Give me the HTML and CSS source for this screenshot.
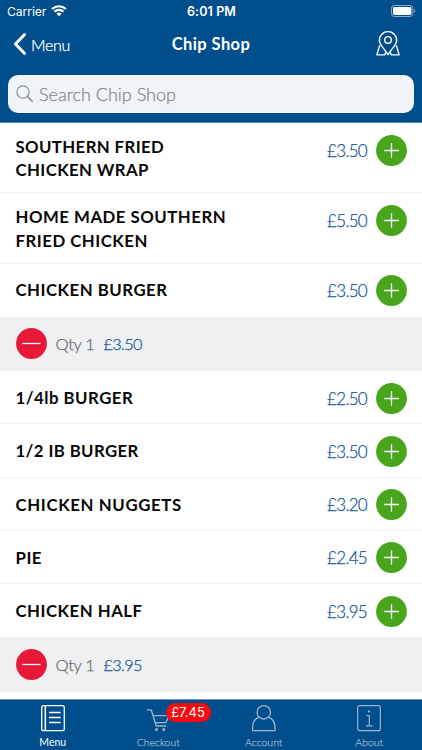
FILE: index.html
```
<!DOCTYPE html>
<html lang="en">
<head>
<meta charset="utf-8">
<title>Chip Shop</title>
<link rel="stylesheet" href="styles.css">
</head>
<body>
<svg class="defs" width="0" height="0">
  <symbol id="plus" viewBox="0 0 31 31"><circle cx="15.5" cy="15.5" r="15.4" fill="#49a51b"/><path d="M8.3 15.5h14.6M15.5 8.2v14.6" stroke="#fff" stroke-width="1.3"/></symbol>
  <symbol id="minus" viewBox="0 0 31 31"><circle cx="15.5" cy="15.5" r="15.4" fill="#e71939"/><path d="M6.3 15.5h18.2" stroke="#fff" stroke-width="1.3"/></symbol>
</svg>
<div class="screen">
  <header class="header">
    <div class="status">
      <div class="carrier"><span>Carrier</span>
        <svg width="16" height="12" viewBox="0 0 16 12" fill="#fff"><path d="M8 11.300 5.400 8.700a3.800 3.800 0 0 1 5.200 0z"/><path d="M3.400 6.700a6.600 6.600 0 0 1 9.200 0M1.100 4.100a9.900 9.900 0 0 1 13.800 0" fill="none" stroke="#fff" stroke-width="2.100"/></svg>
      </div>
      <span class="time">6:01 PM</span>
      <svg class="battery" width="25" height="12" viewBox="0 0 25 12"><rect x=".5" y=".5" width="21.4" height="11" rx="2.8" fill="none" stroke="#8eacc9"/><rect x="2" y="2" width="18.4" height="8" rx="1.4" fill="#fff"/><path d="M23.2 4v4c1.4-.6 1.4-3.4 0-4" fill="#8eacc9"/></svg>
    </div>
    <nav class="nav">
      <div class="back"><svg width="14" height="22" viewBox="0 0 14 22"><path d="M11.4 1.700 2.400 11l9 9.300" fill="none" stroke="#fff" stroke-width="3" stroke-linecap="round" stroke-linejoin="round"/></svg><span>Menu</span></div>
      <h1 class="title">Chip Shop</h1>
      <svg class="pin" width="24" height="26" viewBox="0 0 24 26" fill="none" stroke="#fff" stroke-width="1.400" stroke-linejoin="round"><path d="M12 23.700C9.100 18.600 3.300 14.200 3.300 9.300a8.700 8.700 0 0 1 17.400 0c0 4.900-5.800 9.300-8.700 14.400z"/><circle cx="12" cy="8.900" r="3.300"/><path d="M4.300 14.900H3.500L.9 23.900h7.700l1.500-2.700M19.700 14.900h.8l2.600 9h-7.700l-1.500-2.700"/></svg>
    </nav>
    <div class="search"><svg width="18" height="18" viewBox="0 0 18 18" fill="none" stroke="#8e9094" stroke-width="1.200"><circle cx="7" cy="7" r="6.100"/><path d="m11.400 11.400 5.200 5.200" stroke-width="1.500"/></svg><span>Search Chip Shop</span></div>
  </header>
  <main class="list">
    <div class="row tall"><span class="name">SOUTHERN FRIED<br>CHICKEN WRAP</span><span class="price">£3.50</span><svg class="dot"><use href="#plus"/></svg></div>
    <div class="row tall"><span class="name wide">HOME MADE SOUTHERN<br>FRIED CHICKEN</span><span class="price">£5.50</span><svg class="dot"><use href="#plus"/></svg></div>
    <div class="row last"><span class="name wide">CHICKEN BURGER</span><span class="price">£3.50</span><svg class="dot"><use href="#plus"/></svg></div>
    <div class="qty"><svg class="dot"><use href="#minus"/></svg><span class="count">Qty 1</span><span class="price">£3.50</span></div>
    <div class="row"><span class="name wide">1/4lb BURGER</span><span class="price">£2.50</span><svg class="dot"><use href="#plus"/></svg></div>
    <div class="row"><span class="name">1/2 IB BURGER</span><span class="price">£3.50</span><svg class="dot"><use href="#plus"/></svg></div>
    <div class="row"><span class="name wider">CHICKEN NUGGETS</span><span class="price">£3.20</span><svg class="dot"><use href="#plus"/></svg></div>
    <div class="row"><span class="name wide">PIE</span><span class="price">£2.45</span><svg class="dot"><use href="#plus"/></svg></div>
    <div class="row last"><span class="name wide">CHICKEN HALF</span><span class="price">£3.95</span><svg class="dot"><use href="#plus"/></svg></div>
    <div class="qty"><svg class="dot"><use href="#minus"/></svg><span class="count">Qty 1</span><span class="price">£3.95</span></div>
  </main>
  <footer class="tabs">
    <div class="tab active"><svg width="26" height="28" viewBox="0 0 26 28" fill="none" stroke="currentColor" stroke-width="1.300"><rect x="1.700" y="1.700" width="22.600" height="25" rx="2"/><path d="M5.300 1.500v25.400" stroke-width="1.500"/><path d="M9 8.500h11.600M9 13.500h11.600M9 18.500h11.600"/></svg><span>Menu</span></div>
    <div class="tab"><svg width="26" height="28" viewBox="0 0 26 28" fill="none" stroke="currentColor" stroke-width="1.300" stroke-linejoin="round"><path d="M1.800 5.800h4.400l5 16.200h10M8 11.700h16L20.800 18.700H10.300"/><circle cx="11.500" cy="25.600" r="1.500" fill="currentColor" stroke="none"/><circle cx="18.800" cy="25.600" r="1.500" fill="currentColor" stroke="none"/></svg><span>Checkout</span><b class="badge">£7.45</b></div>
    <div class="tab"><svg width="26" height="28" viewBox="0 0 26 28" fill="none" stroke="currentColor" stroke-width="1.300" stroke-linejoin="round"><circle cx="12.800" cy="8.300" r="6.700"/><path d="M8 13.100C3.800 14.900 1.600 19 1.600 23.500v3.100h22.400v-3.100c0-4.500-2.200-8.600-6.400-10.400"/></svg><span>Account</span></div>
    <div class="tab"><svg width="26" height="28" viewBox="0 0 26 28" fill="none" stroke="currentColor" stroke-width="1.200"><rect x="1.700" y="1.700" width="22.600" height="25" rx="2"/><path d="M10.300 11.500h3v10.300M10 21.800h6.600"/><circle cx="12.900" cy="7.400" r="1.100" fill="currentColor" stroke="none"/></svg><span>About</span></div>
  </footer>
</div>
</body>
</html>
```
FILE: styles.css
```
* { box-sizing: border-box; }
body { margin: 0; font-family: Lato, sans-serif; background: #fff; }
.defs { position: absolute; }
.screen { width: 422px; height: 750px; display: flex; flex-direction: column; overflow: hidden; }
.header { height: 123px; flex: none; background: #004e8b; color: #fff; border-bottom: 1px solid #5b86b0; }
.status { height: 22px; display: grid; grid-template-columns: 1fr auto 1fr; align-items: center; padding: 0 6px 0 7px; }
.carrier { display: flex; align-items: center; gap: 5px; font: 400 12.200px Inter, sans-serif; letter-spacing: -.1px; }
.time { font: 600 12.500px Inter, sans-serif; letter-spacing: .1px; }
.battery { justify-self: end; }
.nav { height: 44px; display: grid; grid-template-columns: 1fr auto 1fr; align-items: center; padding: 0 22px 0 13px; }
.back { display: flex; align-items: center; gap: 4px; font-size: 16px; font-weight: 300; letter-spacing: -.3px; }
.back, .search, .price, .count, .tab:not(.active) { -webkit-text-stroke: .25px currentColor; }
.title { margin: 0 0 0 9px; font-size: 16.500px; font-weight: 700; letter-spacing: .4px; }
.pin { justify-self: end; }
.search { margin: 9px 8px 0; height: 38px; border-radius: 10px; background: #f0f3f8; color: #85878c; display: flex; align-items: center; padding: 0 8px; gap: 5px; font-size: 18px; font-weight: 300; }
.list { flex: 1; }
.row { height: 53.250px; display: flex; align-items: flex-start; padding: 11.500px 15px 0 15.500px; border-bottom: 1px solid #f1f1f2; }
.tall { height: 70.300px; }
.last { border-bottom: 0; }
.name { flex: 1; font-size: 16.800px; font-weight: 700; line-height: 23.400px; letter-spacing: .38px; color: #080808; padding-top: 3.400px; white-space: nowrap; }
.wide { letter-spacing: .5px; }
.wider { letter-spacing: .63px; }
.tall .name { padding-top: .3px; }
.price { font-size: 17px; font-weight: 300; line-height: 31px; letter-spacing: -.7px; color: #175697; }
.dot { width: 31px; height: 31px; flex: none; }
.row .dot { margin-left: 9px; }
.qty { height: 54.300px; display: flex; align-items: center; padding: 0 0 0 15.500px; background: #eff0f2; }
.qty .price { font-size: 16.300px; letter-spacing: -.7px; }
.count { font-size: 16.500px; font-weight: 300; letter-spacing: -.3px; color: #68696c; margin: 0 9px 0 9px; }
.tabs { height: 51px; flex: none; display: grid; grid-template-columns: repeat(4, 1fr); background: #004e8b; border-top: 1px solid #6c92b7; }
.tab { position: relative; display: flex; flex-direction: column; align-items: center; padding-top: 4px; color: #9ab5cf; font-size: 10.500px; font-weight: 300; line-height: 13px; gap: 4px; }
.active { color: #fff; font-weight: 400; }
.badge { position: absolute; left: 60px; top: 3px; width: 45px; height: 19px; border-radius: 10px; background: #f70a10; color: #fff; font: 400 13px/19px Inter, sans-serif; text-align: center; -webkit-text-stroke: 0; }
```
